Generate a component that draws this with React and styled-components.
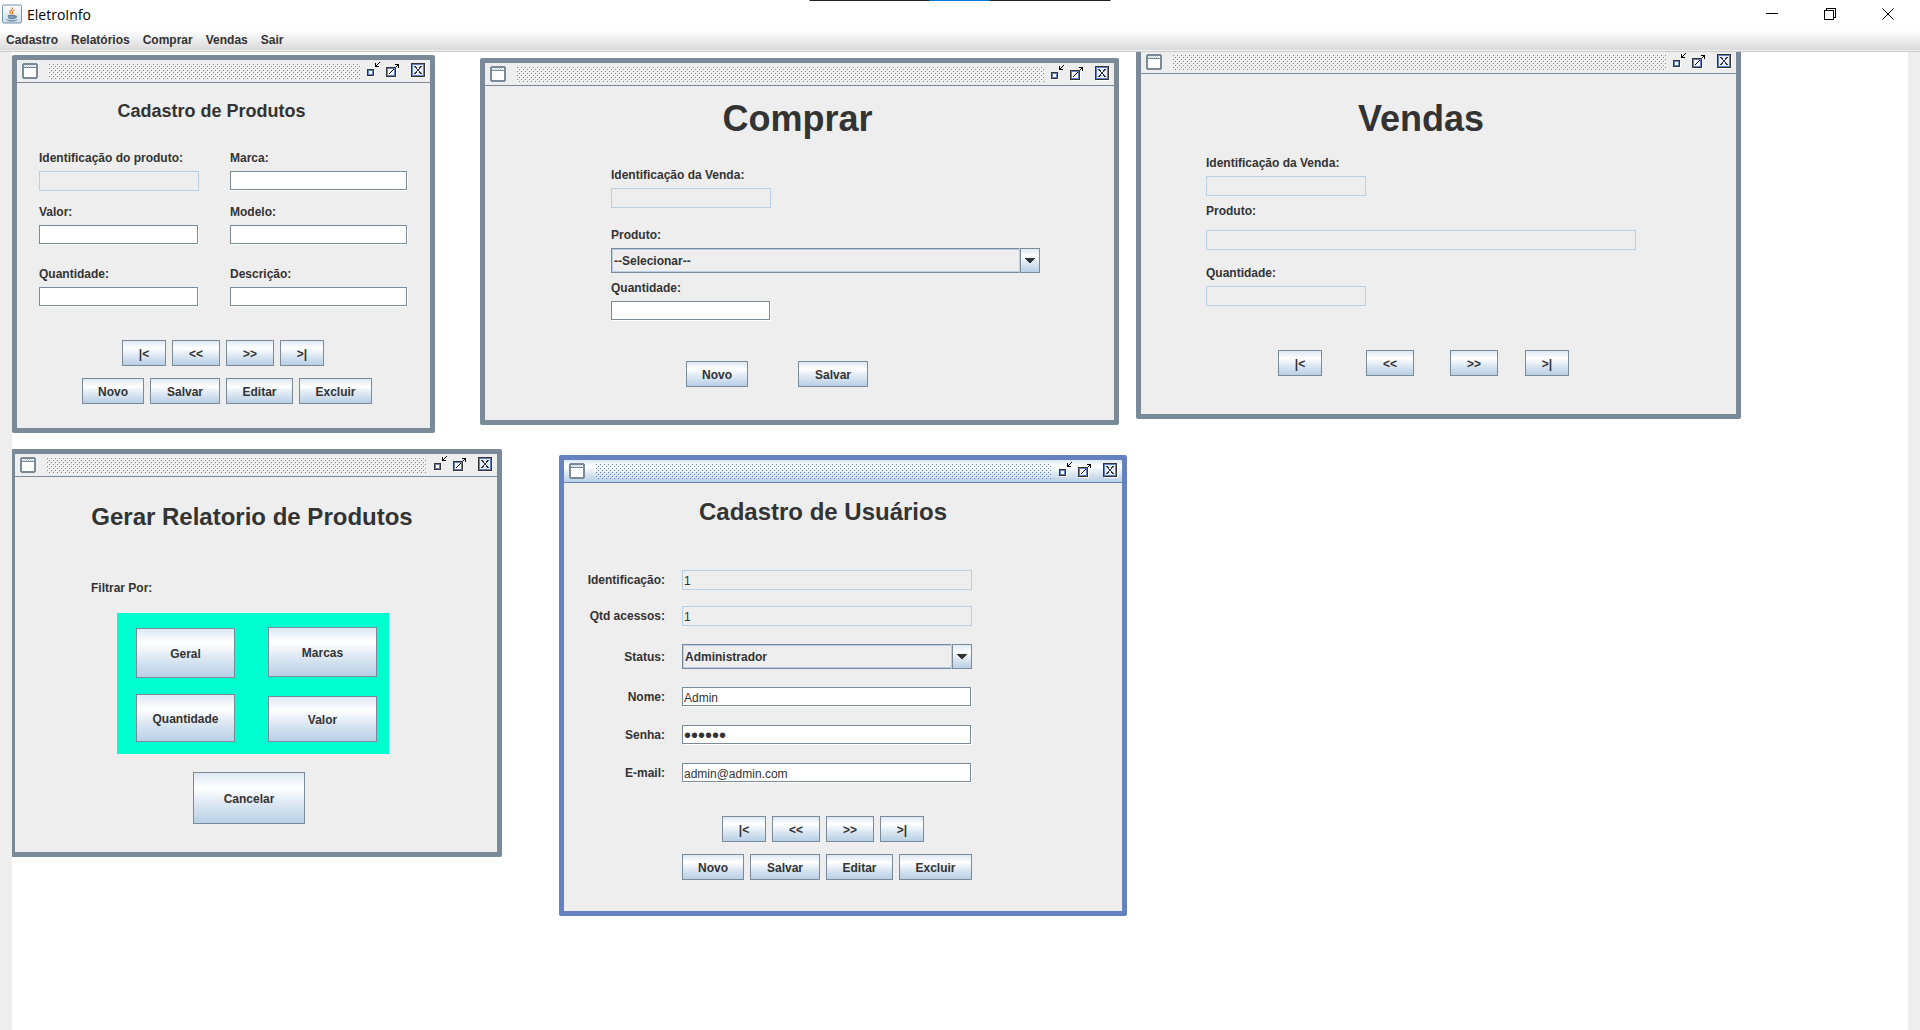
import React, { useId } from "react";
import styled, { createGlobalStyle } from "styled-components";

const ink = "#333333";
const steel = "#7a8a99";
const blue = "#6382bf";
const sky = "#b8cfe5";
const face = "#eeeeee";
const sheen = "linear-gradient(#dde8f3 0%, #ffffff 30%, #dde8f3 60%, #b8cfe5 100%)";

const GlobalStyle = createGlobalStyle`
  * { box-sizing: border-box; }
  body { margin: 0; background: ${face}; }
  body, button, input, select {
    font: bold 12px/15px "Liberation Sans", Arial, sans-serif;
    color: ${ink};
  }
`;

const Frame = styled.div`
  position: relative;
  display: flex;
  flex-direction: column;
  min-height: 100vh;
  overflow: hidden;
`;

const CaptureBar = styled.div`
  position: absolute;
  top: 0;
  left: 50%;
  width: 301px;
  height: 1px;
  transform: translateX(-50%);
  background: linear-gradient(90deg, #1f1f1f 120px, #0078d7 120px 180px, #1f1f1f 180px);
`;

const TopBar = styled.header`
  display: flex;
  align-items: center;
  height: 30px;
  padding: 0 3px 2px 2px;
  background: #ffffff;
`;

const AppTitle = styled.h1`
  flex: 1;
  margin: 0 0 0 5px;
  padding-top: 1px;
  font: 14px/20px "Open Sans", "Noto Sans", sans-serif;
  color: #000000;
`;

const ChromeButton = styled.button`
  display: grid;
  place-items: center;
  width: 58px;
  height: 28px;
  padding: 0;
  border: 0;
  background: none;
`;

const MenuBar = styled.nav`
  display: flex;
  align-items: center;
  gap: 13px;
  height: 22px;
  padding: 0 6px;
  background: linear-gradient(#ffffff, #dadada 20px, ${face} 20px);
  border-bottom: 1px solid #cccccc;
`;

const MenuItem = styled.button`
  padding: 0;
  border: 0;
  background: none;
`;

const Desktop = styled.main`
  position: relative;
  flex: 1;
  margin: 0 12px;
  overflow: hidden;
  background: #ffffff;
`;

const Window = styled.section`
  position: absolute;
  left: ${(p) => p.$x}px;
  top: ${(p) => p.$y}px;
  width: ${(p) => p.$w}px;
  height: ${(p) => p.$h}px;
  border: 5px solid ${(p) => (p.$active ? blue : steel)};
  border-radius: 2px;
  background: ${face};
`;

const TitleBar = styled.div`
  display: flex;
  align-items: center;
  height: 23px;
  padding: 0 4px 0 5px;
  border-bottom: 1px solid ${(p) => (p.$active ? blue : steel)};
  background: ${(p) => (p.$active ? "linear-gradient(#dde8f3, #ffffff 30%, #dde8f3 60%, #b8cfe5)" : face)};
`;

const Grip = styled.svg`
  flex: 1;
  min-width: 0;
  height: 16px;
  margin: 0 6px 0 10px;
`;

const FrameButton = styled.button`
  display: flex;
  align-items: flex-start;
  width: 16px;
  height: 18px;
  margin-left: ${(p) => p.$gap || 0}px;
  padding: 0;
  border: 0;
  background: none;
`;

const Icon = styled.svg`
  display: block;
  flex: none;
`;

const Body = styled.form`
  display: flex;
  flex-direction: column;
  padding: ${(p) => p.$pad};
`;

const Heading = styled.h2`
  margin: 0;
  padding-right: ${(p) => p.$shift || 0}px;
  font-size: ${(p) => p.$size}px;
  line-height: ${(p) => p.$line}px;
  text-align: center;
`;

const Fields = styled.div`
  display: grid;
  grid-template-columns: 160px 178px;
  column-gap: 31px;
  row-gap: 13px;
`;

const Stack = styled.div`
  display: flex;
  flex-direction: column;
  gap: ${(p) => p.$gap || 4}px;
  padding-top: ${(p) => p.$top || 0}px;
`;

const Label = styled.label`
  line-height: 17px;
`;

const Input = styled.input`
  display: block;
  width: ${(p) => (p.$w ? p.$w - 1 + "px" : "calc(100% - 1px)")};
  height: 19px;
  margin: 0 1px 1px 0;
  padding: 2px 1px 0;
  border: 1px solid ${steel};
  border-radius: 0;
  outline: 0;
  background: #ffffff;
  box-shadow: 1px 1px 0 #ffffff;
  font-weight: normal;

  &:read-only {
    width: ${(p) => (p.$w ? p.$w + "px" : "100%")};
    height: 20px;
    margin: 0;
    border-color: ${sky};
    background: ${face};
    box-shadow: none;
  }

  &[type="password"] {
    font-size: 20px;
  }
`;

const ComboBox = styled.div`
  display: grid;
  grid-template-columns: 1fr 20px;
  width: ${(p) => p.$w}px;
  height: 25px;
`;

const Select = styled.select`
  grid-area: 1 / 1 / 2 / 3;
  appearance: none;
  padding: 1px 22px 0 2px;
  border: 1px solid ${steel};
  border-radius: 0;
  outline: 0;
  background: ${face};
  box-shadow: inset 0 0 0 1px ${sky};
`;

const ComboArrow = styled.span`
  grid-area: 1 / 2;
  display: grid;
  place-items: center;
  border: 1px solid ${steel};
  background: ${sheen};
  box-shadow: -1px 0 0 ${sky};
  pointer-events: none;
`;

const ButtonRow = styled.div`
  display: flex;
  gap: ${(p) => p.$gap || 6}px;
  padding: ${(p) => p.$pad || 0};
`;

const Button = styled.button`
  width: ${(p) => (p.$w ? p.$w + "px" : "auto")};
  height: ${(p) => p.$h || 26}px;
  margin-left: ${(p) => p.$ml || 0}px;
  padding: 2px 0 0;
  border: 1px solid ${steel};
  border-radius: 0;
  background: ${sheen};
`;

const UserGrid = styled.div`
  display: grid;
  grid-template-columns: 101px 290px;
  column-gap: 17px;
  row-gap: ${(p) => p.$gap}px;
  align-items: center;

  label {
    padding-top: 1px;
    text-align: right;
  }
`;

const FilterPanel = styled.div`
  display: flex;
  gap: 33px;
  width: 272px;
  margin-left: 102px;
  padding: 14px 12px 12px 19px;
  background: #00ffd0;
`;

const FilterColumn = styled.div`
  display: flex;
  flex-direction: column;
  justify-content: space-between;
  width: ${(p) => p.$w}px;
  height: 115px;
  padding-top: ${(p) => p.$top || 0}px;
`;

function JavaIcon() {
  return (
    <Icon width="20" height="20" viewBox="0 0 20 20" aria-hidden="true">
      <defs>
        <linearGradient id="tile" x1="0" y1="0" x2="0" y2="1">
          <stop offset="0" stopColor="#ffffff" />
          <stop offset="1" stopColor="#cfdbe4" />
        </linearGradient>
      </defs>
      <rect x="0.5" y="1" width="19" height="18" rx="1.5" fill="url(#tile)" stroke="#6f93ac" />
      <path d="M10.5 3.5c1 2-3 3-2.5 5 .2 1 1 1.500 1.500 2M12.500 6c-2 1-2.700 2-1.700 3.200.3.500 0 1-.3 1.300" fill="none" stroke="#e8853a" strokeWidth="1.300" />
      <path d="M6 11.500h7l-.8 3.200H7zM13 12c2.500-.5 2.300 1.800-.3 2.200" fill="#7f9cb3" stroke="#5d809c" strokeWidth="0.900" />
      <path d="M4.500 15.500c2 1.500 8.500 1.500 10.500 0-.5 2.200-9.500 2.200-10.500 0z" fill="#6d8ca5" stroke="#6d8ca5" strokeWidth="0.600" />
    </Icon>
  );
}

function FrameIcon() {
  return (
    <Icon width="16" height="16" shapeRendering="crispEdges" aria-hidden="true">
      <path d="M1 0h14v1h1v14h-1v1H1v-1H0V1h1z" fill={steel} />
      <path d="M2 2h12v2H2z" fill="#ffffff" />
      <path d="M3 2h1v1H3zM5 2h1v1H5zM7 2h1v1H7zM9 2h1v1H9zM11 2h1v1h-1zM2 3h1v1H2zM4 3h1v1H4zM6 3h1v1H6zM8 3h1v1H8zM10 3h1v1h-1zM12 3h1v1h-1z" fill={sky} />
      <path d="M2 5h12v9H2z" fill="#ffffff" />
    </Icon>
  );
}

function MinimizeIcon() {
  return (
    <Icon width="16" height="16" shapeRendering="crispEdges" aria-hidden="true">
      <path d="M2 8h7v7H2z" fill="#ffffff" />
      <path d="M1 7h7v7H1z" fill={ink} />
      <path d="M2 8h5v5H2z" fill={blue} />
      <path d="M3 9h3v3H3z" fill="#ffffff" />
      <path d="M9 1h1v4H9zM9 4h4v1H9zM10 3h1v1h-1zM11 2h1v1h-1zM12 1h1v1h-1zM13 0h1v1h-1z" fill="#000000" />
    </Icon>
  );
}

function MaximizeIcon() {
  return (
    <Icon width="16" height="16" shapeRendering="crispEdges" aria-hidden="true">
      <path d="M3 6h10v10H3z" fill="#ffffff" />
      <path d="M2 5h10v10H2z" fill={ink} />
      <path d="M3 6h8v8H3z" fill={blue} />
      <path d="M4 7h6v6H4z" fill="#f4f7fb" />
      <path d="M5 11h1v1H5zM6 10h1v1H6zM7 9h1v1H7zM8 8h1v1H8zM9 7h1v1H9zM12 4h1v1h-1zM13 3h1v1h-1zM11 2h4v1h-4zM14 2h1v4h-1z" fill="#000000" />
    </Icon>
  );
}

function CloseIcon() {
  return (
    <Icon width="16" height="16" shapeRendering="crispEdges" aria-hidden="true">
      <path d="M2 2h14v14H2z" fill="#ffffff" />
      <path d="M1 1h14v14H1z" fill={ink} />
      <path d="M2 2h12v12H2z" fill={blue} />
      <path d="M3 3h10v10H3z" fill="#e6edf6" />
      <path d="M4 4h2v1H4zM5 5h2v1H5zM6 6h1v1H6zM7 7h2v2H7zM9 6h1v1H9zM9 5h2v1H9zM10 4h2v1h-2zM6 9h1v1H6zM9 9h1v1H9zM5 10h2v1H5zM9 10h2v1H9zM4 11h2v1H4zM10 11h2v1h-2z" fill={ink} />
    </Icon>
  );
}

function InternalWindow({ title, x, y, w, h, active, children }) {
  const id = useId();
  return (
    <Window aria-label={title} $x={x} $y={y} $w={w} $h={h} $active={active}>
      <TitleBar $active={active}>
        <FrameIcon />
        <Grip width="100%" height="16" shapeRendering="crispEdges" aria-hidden="true">
          <pattern id={id} width="4" height="4" patternUnits="userSpaceOnUse">
            <path d="M0 0h1v1H0zM2 2h1v1H2z" fill="#ffffff" />
            <path d="M1 1h1v1H1zM3 3h1v1H3z" fill={active ? blue : steel} />
          </pattern>
          <rect width="100%" height="16" fill={`url(#${id})`} />
        </Grip>
        <FrameButton type="button" aria-label="Minimizar"><MinimizeIcon /></FrameButton>
        <FrameButton type="button" aria-label="Maximizar" $gap={2}><MaximizeIcon /></FrameButton>
        <FrameButton type="button" aria-label="Fechar" $gap={10}><CloseIcon /></FrameButton>
      </TitleBar>
      {children}
    </Window>
  );
}

function Field({ label, w, gap, top, ...rest }) {
  const id = useId();
  return (
    <Stack $gap={gap} $top={top}>
      <Label htmlFor={id}>{label}</Label>
      <Input id={id} $w={w} {...rest} />
    </Stack>
  );
}

function Combo({ id, value, w }) {
  return (
    <ComboBox $w={w}>
      <Select id={id} defaultValue={value}>
        <option>{value}</option>
      </Select>
      <ComboArrow>
        <Icon width="10" height="5" shapeRendering="crispEdges" aria-hidden="true">
          <path d="M0 0h10v1H0zM1 1h8v1H1zM2 2h6v1H2zM3 3h4v1H3zM4 4h2v1H4z" fill={ink} />
        </Icon>
      </ComboArrow>
    </ComboBox>
  );
}

function UserRow({ id, label, ...rest }) {
  return (
    <>
      <Label htmlFor={id}>{label}</Label>
      <Input id={id} {...rest} />
    </>
  );
}

function NavButtons({ pad }) {
  return (
    <ButtonRow $pad={pad}>
      <Button type="button" $w={44}>|&lt;</Button>
      <Button type="button" $w={48}>&lt;&lt;</Button>
      <Button type="button" $w={48}>&gt;&gt;</Button>
      <Button type="button" $w={44}>&gt;|</Button>
    </ButtonRow>
  );
}

function EditButtons({ pad }) {
  return (
    <ButtonRow $pad={pad}>
      <Button type="button" $w={62}>Novo</Button>
      <Button type="button" $w={70}>Salvar</Button>
      <Button type="button" $w={67}>Editar</Button>
      <Button type="button" $w={73}>Excluir</Button>
    </ButtonRow>
  );
}

export default function App() {
  return (
    <Frame>
      <GlobalStyle />
      <TopBar>
        <JavaIcon />
        <AppTitle>EletroInfo</AppTitle>
        <ChromeButton type="button" aria-label="Minimizar">
          <Icon width="12" height="12" shapeRendering="crispEdges"><path d="M0 5h12v1H0z" /></Icon>
        </ChromeButton>
        <ChromeButton type="button" aria-label="Restaurar">
          <Icon width="12" height="12" shapeRendering="crispEdges">
            <path d="M0.500 2.500h9v9h-9zM2.500 2V0.500h9v9H10" fill="none" stroke="#000000" />
          </Icon>
        </ChromeButton>
        <ChromeButton type="button" aria-label="Fechar">
          <Icon width="12" height="12"><path d="M0.500 0.500l11 11M11.500 0.500l-11 11" stroke="#000000" /></Icon>
        </ChromeButton>
      </TopBar>
      <CaptureBar />
      <MenuBar>
        <MenuItem type="button">Cadastro</MenuItem>
        <MenuItem type="button">Relatórios</MenuItem>
        <MenuItem type="button">Comprar</MenuItem>
        <MenuItem type="button">Vendas</MenuItem>
        <MenuItem type="button">Sair</MenuItem>
      </MenuBar>
      <Desktop>
        <InternalWindow title="Cadastro de Produtos" x={0} y={3} w={423} h={378}>
          <Body $pad="16px 22px 0">
            <Heading $size={18} $line={24} $shift={24}>Cadastro de Produtos</Heading>
            <Stack $top={27}>
              <Fields>
                <Field label="Identificação do produto:" readOnly />
                <Field label="Marca:" />
                <Field label="Valor:" />
                <Field label="Modelo:" />
                <Field label="Quantidade:" top={8} />
                <Field label="Descrição:" top={8} />
              </Fields>
            </Stack>
            <NavButtons pad="33px 0 0 83px" />
            <EditButtons pad="12px 0 0 43px" />
          </Body>
        </InternalWindow>

        <InternalWindow title="Comprar" x={468} y={6} w={639} h={367}>
          <Body $pad="12px 0 0 126px">
            <Heading $size={36} $line={42} $shift={130}>Comprar</Heading>
            <Field label="Identificação da Venda:" w={160} top={27} readOnly />
            <Stack $top={19}>
              <Label htmlFor="compra-produto">Produto:</Label>
              <Combo id="compra-produto" value="--Selecionar--" w={429} />
            </Stack>
            <Field label="Quantidade:" w={160} top={7} />
            <ButtonRow $gap={50} $pad="40px 0 0 75px">
              <Button type="button" $w={62}>Novo</Button>
              <Button type="button" $w={70}>Salvar</Button>
            </ButtonRow>
          </Body>
        </InternalWindow>

        <InternalWindow title="Vendas" x={1124} y={-6} w={605} h={373}>
          <Body $pad="24px 0 0 65px">
            <Heading $size={36} $line={42} $shift={100}>Vendas</Heading>
            <Field label="Identificação da Venda:" w={160} top={15} readOnly />
            <Field label="Produto:" w={430} top={7} gap={10} readOnly />
            <Field label="Quantidade:" w={160} top={15} readOnly />
            <ButtonRow $gap={27} $pad="44px 0 0 72px">
              <Button type="button" $w={44}>|&lt;</Button>
              <Button type="button" $w={48} $ml={17}>&lt;&lt;</Button>
              <Button type="button" $w={48} $ml={9}>&gt;&gt;</Button>
              <Button type="button" $w={44}>&gt;|</Button>
            </ButtonRow>
          </Body>
        </InternalWindow>

        <InternalWindow title="Gerar Relatorio de Produtos" x={-2} y={397} w={492} h={408}>
          <Body $pad="26px 0 0">
            <Heading $size={24} $line={28} $shift={8}>Gerar Relatorio de Produtos</Heading>
            <ButtonRow $pad="49px 0 16px 76px">
              <Label as="span">Filtrar Por:</Label>
            </ButtonRow>
            <FilterPanel>
              <FilterColumn $w={99} $top={1}>
                <Button type="button" $h={50}>Geral</Button>
                <Button type="button" $h={48}>Quantidade</Button>
              </FilterColumn>
              <FilterColumn $w={109}>
                <Button type="button" $h={50}>Marcas</Button>
                <Button type="button" $h={46}>Valor</Button>
              </FilterColumn>
            </FilterPanel>
            <ButtonRow $pad="18px 0 0 178px">
              <Button type="button" $w={112} $h={52}>Cancelar</Button>
            </ButtonRow>
          </Body>
        </InternalWindow>

        <InternalWindow title="Cadastro de Usuários" x={547} y={403} w={568} h={461} active>
          <Body $pad="15px 0 0">
            <Heading $size={24} $line={28} $shift={40}>Cadastro de Usuários</Heading>
            <Stack $top={44} $gap={18}>
              <UserGrid $gap={16}>
                <UserRow id="usuario-id" label="Identificação:" defaultValue="1" readOnly />
                <UserRow id="usuario-acessos" label="Qtd acessos:" defaultValue="1" readOnly />
              </UserGrid>
              <UserGrid $gap={18}>
                <Label htmlFor="usuario-status">Status:</Label>
                <Combo id="usuario-status" value="Administrador" w={290} />
                <UserRow id="usuario-nome" label="Nome:" defaultValue="Admin" />
                <UserRow id="usuario-senha" label="Senha:" type="password" defaultValue="123456" />
                <UserRow id="usuario-email" label="E-mail:" defaultValue="admin@admin.com" />
              </UserGrid>
            </Stack>
            <NavButtons pad="33px 0 0 158px" />
            <EditButtons pad="12px 0 0 118px" />
          </Body>
        </InternalWindow>
      </Desktop>
    </Frame>
  );
}
